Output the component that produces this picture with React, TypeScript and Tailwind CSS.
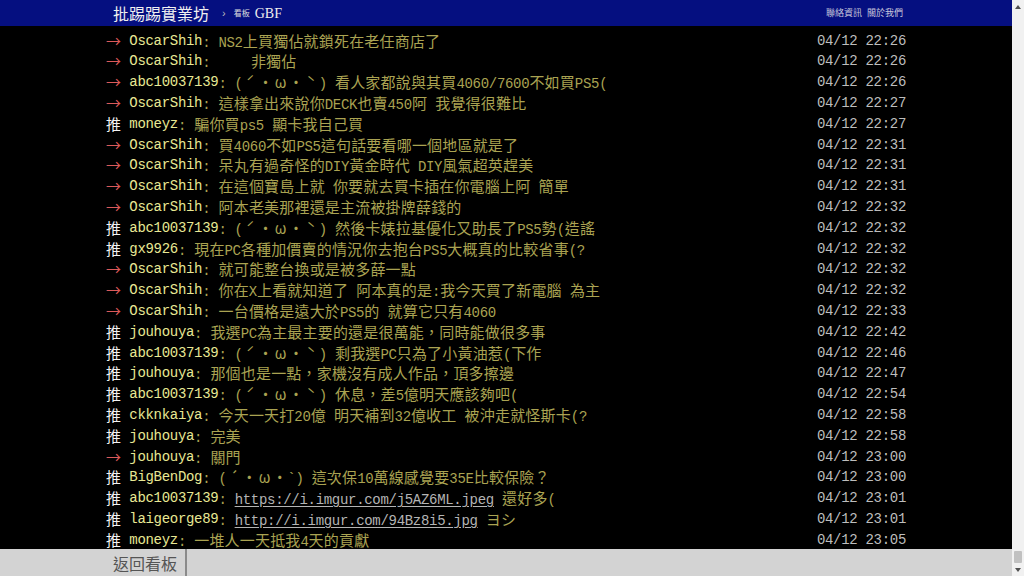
import React from "react";

interface Push {
  tag: "推" | "→";
  user: string;
  text: string;
  time: string;
}

const pushes: Push[] = [
  { tag: "→", user: "OscarShih", text: "NS2上買獨佔就鎖死在老任商店了", time: "04/12 22:26" },
  { tag: "→", user: "OscarShih", text: "    非獨佔", time: "04/12 22:26" },
  { tag: "→", user: "abc10037139", text: "(ˊ・ω・ˋ) 看人家都說與其買4060/7600不如買PS5(", time: "04/12 22:26" },
  { tag: "→", user: "OscarShih", text: "這樣拿出來說你DECK也賣450阿 我覺得很難比", time: "04/12 22:27" },
  { tag: "推", user: "moneyz", text: "騙你買ps5 顯卡我自己買", time: "04/12 22:27" },
  { tag: "→", user: "OscarShih", text: "買4060不如PS5這句話要看哪一個地區就是了", time: "04/12 22:31" },
  { tag: "→", user: "OscarShih", text: "呆丸有過奇怪的DIY黃金時代 DIY風氣超英趕美", time: "04/12 22:31" },
  { tag: "→", user: "OscarShih", text: "在這個寶島上就 你要就去買卡插在你電腦上阿 簡單", time: "04/12 22:31" },
  { tag: "→", user: "OscarShih", text: "阿本老美那裡還是主流被掛牌薛錢的", time: "04/12 22:32" },
  { tag: "推", user: "abc10037139", text: "(ˊ・ω・ˋ) 然後卡婊拉基優化又助長了PS5勢(造謠", time: "04/12 22:32" },
  { tag: "推", user: "gx9926", text: "現在PC各種加價賣的情況你去抱台PS5大概真的比較省事(?", time: "04/12 22:32" },
  { tag: "→", user: "OscarShih", text: "就可能整台換或是被多薛一點", time: "04/12 22:32" },
  { tag: "→", user: "OscarShih", text: "你在X上看就知道了 阿本真的是:我今天買了新電腦 為主", time: "04/12 22:32" },
  { tag: "→", user: "OscarShih", text: "一台價格是遠大於PS5的 就算它只有4060", time: "04/12 22:33" },
  { tag: "推", user: "jouhouya", text: "我選PC為主最主要的還是很萬能，同時能做很多事", time: "04/12 22:42" },
  { tag: "推", user: "abc10037139", text: "(ˊ・ω・ˋ) 剩我選PC只為了小黃油惹(下作", time: "04/12 22:46" },
  { tag: "推", user: "jouhouya", text: "那個也是一點，家機沒有成人作品，頂多擦邊", time: "04/12 22:47" },
  { tag: "推", user: "abc10037139", text: "(ˊ・ω・ˋ) 休息，差5億明天應該夠吧(", time: "04/12 22:54" },
  { tag: "推", user: "ckknkaiya", text: "今天一天打20億 明天補到32億收工 被沖走就怪斯卡(?", time: "04/12 22:58" },
  { tag: "推", user: "jouhouya", text: "完美", time: "04/12 22:58" },
  { tag: "→", user: "jouhouya", text: "關門", time: "04/12 23:00" },
  { tag: "推", user: "BigBenDog", text: "(´・ω・`) 這次保10萬線感覺要35E比較保險？", time: "04/12 23:00" },
  { tag: "推", user: "abc10037139", text: "https://i.imgur.com/j5AZ6ML.jpeg 還好多(", time: "04/12 23:01" },
  { tag: "推", user: "laigeorge89", text: "http://i.imgur.com/94Bz8i5.jpg ヨシ", time: "04/12 23:01" },
  { tag: "推", user: "moneyz", text: "一堆人一天抵我4天的貢獻", time: "04/12 23:05" },
];

// half-width runs stay in the mono font, full-width chars get a fixed cell
function Bbs({ text }: { text: string }) {
  const runs = text.match(/[\x00-\x7f]+|[^\x00-\x7f]/g) ?? [];
  return (
    <>
      {runs.map((r, i) =>
        r.charCodeAt(0) > 0x7f ? (
          <span
            key={i}
            className="inline-block w-[15.2px] text-center font-['Noto_Sans_CJK_TC',sans-serif] text-[15px] leading-[20.8px] tracking-normal"
          >
            {r}
          </span>
        ) : (
          <span key={i} className="whitespace-pre">
            {r}
          </span>
        ),
      )}
    </>
  );
}

function Content({ text }: { text: string }) {
  const parts = text.split(/(https?:\/\/\S+)/);
  return (
    <>
      {parts.map((p, i) =>
        /^https?:\/\//.test(p) ? (
          <span key={i} className="text-[#b4b4b4] underline underline-offset-2">
            <Bbs text={p} />
          </span>
        ) : (
          <Bbs key={i} text={p} />
        ),
      )}
    </>
  );
}

function PushRow({ push }: { push: Push }) {
  return (
    <div className="flex h-[20.8px] whitespace-nowrap leading-[20.8px]">
      <span className={push.tag === "推" ? "text-[#f4f4f4]" : "text-[#dc5a5a]"}>
        <Bbs text={push.tag + " "} />
      </span>
      <span className="text-[#e8e894]">
        <Bbs text={push.user} />
      </span>
      <span className="min-w-0 flex-1 overflow-hidden text-[#aaa352]">
        <Content text={": " + push.text} />
      </span>
      <span className="text-[#bdbdbd]">
        <Bbs text={push.time} />
      </span>
    </div>
  );
}

function Scrollbar() {
  return (
    <div className="flex w-[12px] flex-col bg-[#f1f1f1]">
      <div className="flex h-[14px] items-center justify-center">
        <div className="h-0 w-0 border-x-[3px] border-b-[4px] border-x-transparent border-b-[#505050]" />
      </div>
      <div className="flex-1" />
      <div className="mx-[2px] h-[12px] rounded-[1px] bg-[#c1c1c1]" />
      <div className="flex h-[13px] items-center justify-center">
        <div className="h-0 w-0 border-x-[3px] border-t-[4px] border-x-transparent border-t-[#505050]" />
      </div>
    </div>
  );
}

export default function App() {
  return (
    <div className="flex h-[576px] w-[1024px] overflow-hidden bg-black">
      <div className="flex min-w-0 flex-1 flex-col">
        <header className="h-[26px] shrink-0 bg-[#050f80]">
          <div className="mx-auto flex h-full w-[800px] items-center justify-between pl-[7px] pr-[3px]">
            <div className="flex items-center">
              <span className="font-['Noto_Sans_CJK_TC',sans-serif] text-[16px] leading-none text-[#f0f0f0]">
                批踢踢實業坊
              </span>
              <span className="ml-[13px] font-['Liberation_Sans',sans-serif] text-[11px] text-[#bbb]">›</span>
              <span className="ml-[8px] font-['Noto_Sans_CJK_TC',sans-serif] text-[8px] text-[#ddd]">看板</span>
              <span className="ml-[5px] font-['Liberation_Serif',serif] text-[14px] text-[#eee]">GBF</span>
            </div>
            <div className="flex gap-[5px] font-['Noto_Sans_CJK_TC',sans-serif] text-[9px] text-[#c8c8dc]">
              <span>聯絡資訊</span>
              <span>關於我們</span>
            </div>
          </div>
        </header>

        <main className="min-h-0 flex-1 overflow-hidden">
          <div className="mx-auto w-[800px] pt-[4.6px] font-['Liberation_Mono',monospace] text-[14px] tracking-[-0.3px]">
            {pushes.map((p, i) => (
              <PushRow key={i} push={p} />
            ))}
          </div>
        </main>

        <footer className="h-[27px] shrink-0 bg-[#d3d3d3]">
          <div className="mx-auto flex h-full w-[800px]">
            <button className="h-full border-r-2 border-[#8a8a8a] pl-[7px] pr-[8px] font-['Noto_Sans_CJK_TC',sans-serif] text-[16px] text-[#555]">
              返回看板
            </button>
          </div>
        </footer>
      </div>
      <Scrollbar />
    </div>
  );
}
